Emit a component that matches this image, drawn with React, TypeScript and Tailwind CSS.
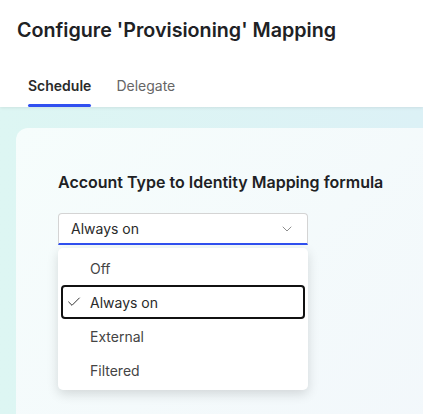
import { Check, ChevronDown } from "lucide-react";

const OPTIONS = ["Off", "Always on", "External", "Filtered"];
const SELECTED = "Always on";

export default function App() {
  return (
    <div className="h-[414px] w-[423px] overflow-hidden bg-white font-['Inter',sans-serif] text-[#1f1f1f]">
      {/* Header */}
      <div className="relative z-10 bg-white shadow-[0_1px_3px_rgba(0,0,0,0.08)]">
        <h1 className="px-[17px] pt-[17px] text-[19.7px] font-semibold leading-[26px] text-[#202124]">
          Configure 'Provisioning' Mapping
        </h1>
        <div className="mt-[34px] flex gap-[25px] px-[28px]">
          <div className="flex flex-col">
            <span className="text-[14px] font-semibold leading-[18px] text-[#2a2a2a]">Schedule</span>
            <span className="mt-[9px] h-[3px] rounded-full bg-[#3050f0]" />
          </div>
          <span className="text-[14px] leading-[18px] text-[#666]">Delegate</span>
        </div>
      </div>

      {/* Body */}
      <div className="h-full bg-gradient-to-r from-[#ddf6f3] to-[#dcf1f6] pl-[16px] pt-[21px]">
        <div className="h-full rounded-tl-[12px] bg-gradient-to-br from-[#f6fdfc] to-[#f2f7fb] pl-[42px] pt-[44px]">
          <h2 className="text-[16px] font-semibold leading-[20px] text-[#202124]">
            Account Type to Identity Mapping formula
          </h2>

          <div className="relative mt-[21px] w-[250px]">
            <button className="flex h-[32px] w-full items-center justify-between rounded-t-[4px] border border-[#d4d4d4] border-b-[2px] border-b-[#3050f0] bg-white pl-[12px] pr-[12px] text-[14px] text-[#2a2a2a]">
              <span>{SELECTED}</span>
              <ChevronDown size={16} strokeWidth={1.25} className="text-[#777]" />
            </button>

            <ul className="mt-[3px] rounded-[5px] bg-white py-[3px] shadow-[0_4px_12px_rgba(0,0,0,0.14)]">
              {OPTIONS.map((opt) => {
                const active = opt === SELECTED;
                return (
                  <li
                    key={opt}
                    className={
                      active
                        ? "mx-[3px] flex h-[34px] items-center rounded-[4px] border-2 border-[#111] pl-[3px] text-[14px] text-[#2a2a2a]"
                        : "mx-[3px] flex h-[34px] items-center pl-[5px] text-[14px] text-[#444]"
                    }
                  >
                    <span className="flex w-[24px] items-center">
                      {active && <Check size={16} strokeWidth={1.5} className="text-[#333]" />}
                    </span>
                    {opt}
                  </li>
                );
              })}
            </ul>
          </div>
        </div>
      </div>
    </div>
  );
}
